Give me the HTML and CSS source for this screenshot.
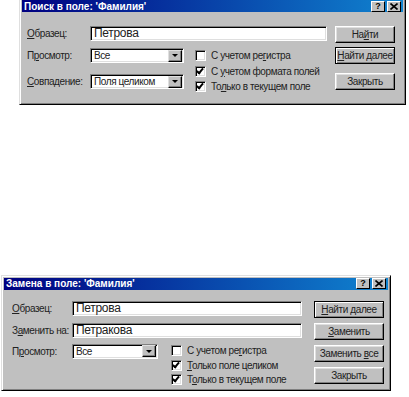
FILE: index.html
```html
<!DOCTYPE html>
<html lang="ru">
<head>
  <meta charset="UTF-8" />
  <title>Поиск и замена</title>
  <link rel="stylesheet" href="styles.css">
</head>
<body>
  <div class="dlg find">
    <div class="titlebar">
      <span>Поиск в поле: 'Фамилия'</span>
      <div class="tb-btns">
        <span class="tb-btn">?</span>
        <span class="tb-btn"><svg width="8" height="7" viewBox="0 0 8 7"><path d="M0.5 0.5 L7.5 6.5 M7.5 0.5 L0.5 6.5" stroke="#000" stroke-width="1.6"/></svg></span>
      </div>
    </div>
    <div class="dlg-body">
      <div class="form">
        <div class="row first">
          <span class="label"><u>О</u>бразец:</span>
          <div class="field">Петрова</div>
        </div>
        <div class="lower">
          <div class="combos">
            <div class="row">
              <span class="label">П<u>р</u>осмотр:</span>
              <div class="combo"><span>Все</span><span class="drop"><i></i></span></div>
            </div>
            <div class="row">
              <span class="label"><u>С</u>овпадение:</span>
              <div class="combo"><span>Поля целиком</span><span class="drop"><i></i></span></div>
            </div>
          </div>
          <div class="checks">
            <div class="check"><span class="cb"></span><span>С учетом ре<u>г</u>истра</span></div>
            <div class="check"><span class="cb on"></span><span>С <u>у</u>четом формата полей</span></div>
            <div class="check"><span class="cb on"></span><span>То<u>л</u>ько в текущем поле</span></div>
          </div>
        </div>
      </div>
      <div class="btns">
        <div class="btn">На<u>й</u>ти</div>
        <div class="btn default"><u>Н</u>айти далее</div>
        <div class="btn close">Закрыть</div>
      </div>
    </div>
  </div>

  <div class="dlg replace">
    <div class="titlebar">
      <span>Замена в поле: 'Фамилия'</span>
      <div class="tb-btns">
        <span class="tb-btn">?</span>
        <span class="tb-btn"><svg width="8" height="7" viewBox="0 0 8 7"><path d="M0.5 0.5 L7.5 6.5 M7.5 0.5 L0.5 6.5" stroke="#000" stroke-width="1.6"/></svg></span>
      </div>
    </div>
    <div class="dlg-body">
      <div class="form">
        <div class="row first">
          <span class="label"><u>О</u>бразец:</span>
          <div class="field">Петрова</div>
        </div>
        <div class="row second">
          <span class="label">З<u>а</u>менить на:</span>
          <div class="field">Петракова</div>
        </div>
        <div class="lower">
          <div class="combos">
            <div class="row">
              <span class="label">П<u>р</u>осмотр:</span>
              <div class="combo"><span>Все</span><span class="drop"><i></i></span></div>
            </div>
          </div>
          <div class="checks">
            <div class="check"><span class="cb"></span><span>С учетом ре<u>г</u>истра</span></div>
            <div class="check"><span class="cb on"></span><span><u>Т</u>олько поле целиком</span></div>
            <div class="check"><span class="cb on"></span><span>Т<u>о</u>лько в текущем поле</span></div>
          </div>
        </div>
      </div>
      <div class="btns">
        <div class="btn default"><u>Н</u>айти далее</div>
        <div class="btn"><u>З</u>аменить</div>
        <div class="btn">Заменить <u>в</u>се</div>
        <div class="btn">Закрыть</div>
      </div>
    </div>
  </div>
</body>
</html>
```

FILE: styles.css
```css
body {
  margin: 0;
  background: #fff;
  font-family: 'Liberation Sans', Arial, sans-serif;
  font-size: 10px;
  color: #000;
}

u { text-decoration: underline; text-underline-offset: 1px; }

.dlg {
  background: #c0c0c0;
  border: 1px solid;
  border-color: #dfdfdf #000 #000 #dfdfdf;
  box-shadow: inset 1px 1px #fff, inset -1px -1px #808080;
  padding: 2px;
  white-space: nowrap;
  letter-spacing: -0.4px;
  color: #222;
}

.find {
  width: 381px;
  margin: -3px 0 0 19px;
}

.replace {
  width: 384px;
  margin: 170px 0 0 1px;
}

.titlebar {
  height: 12px;
  background: linear-gradient(to right, #000080, #1084d0);
  color: #fff;
  font-weight: bold;
  font-size: 10px;
  letter-spacing: 0;
  display: flex;
  align-items: center;
  justify-content: space-between;
  padding: 0 2px 0 2px;
}

.tb-btns { display: flex; gap: 2px; }

.tb-btn {
  width: 12px;
  height: 9px;
  background: #c0c0c0;
  border: 1px solid;
  border-color: #fff #000 #000 #fff;
  color: #000;
  font-size: 9px;
  line-height: 9px;
  display: flex;
  align-items: center;
  justify-content: center;
}

.dlg-body {
  display: flex;
  justify-content: space-between;
}

.find .dlg-body { padding: 14px 8px 7px 5px; }
.replace .dlg-body { padding: 11px 4px 1px 8px; }

.form { display: flex; flex-direction: column; }

.row { display: flex; align-items: center; }

.label { flex-shrink: 0; }
.find .label { width: 63px; }
.replace .label { width: 60px; }

.field {
  height: 13px;
  background: #fff;
  border: 1px solid;
  border-color: #808080 #fff #fff #808080;
  box-shadow: inset 1px 1px #000, inset -1px -1px #dfdfdf;
  font-size: 12px;
  line-height: 13px;
  letter-spacing: -0.3px;
  padding: 0 0 0 3px;
}

.find .field { width: 232px; }
.replace .field { width: 225px; }
.replace .second { margin-top: 7px; }

.lower { display: flex; }
.find .lower { margin-top: 7px; gap: 11px; }
.replace .lower { margin-top: 6px; gap: 13px; }

.combos { display: flex; flex-direction: column; gap: 11px; }

.combo {
  height: 13px;
  background: #fff;
  border: 1px solid;
  border-color: #808080 #fff #fff #808080;
  box-shadow: inset 1px 1px #000, inset -1px -1px #dfdfdf;
  display: flex;
  align-items: center;
  justify-content: space-between;
  padding: 0 1px 0 3px;
}

.find .combo { width: 88px; }
.replace .combo { width: 80px; }

.drop {
  width: 12px;
  height: 10px;
  background: #c0c0c0;
  border: 1px solid;
  border-color: #dfdfdf #000 #000 #dfdfdf;
  box-shadow: inset -1px -1px #808080;
  display: flex;
  align-items: center;
  justify-content: center;
}

.drop i {
  width: 0;
  height: 0;
  border-left: 3px solid transparent;
  border-right: 3px solid transparent;
  border-top: 3px solid #000;
}

.checks { display: flex; flex-direction: column; }

.check {
  height: 15.5px;
  display: flex;
  align-items: center;
  gap: 5px;
}

.replace .check { height: 14.5px; }

.cb {
  width: 9px;
  height: 9px;
  background: #fff;
  border: 1px solid;
  border-color: #808080 #fff #fff #808080;
  box-shadow: inset 1px 1px #000, inset -1px -1px #dfdfdf;
  position: relative;
  flex-shrink: 0;
}

.cb.on::after {
  content: "";
  position: absolute;
  left: 2px;
  top: 0;
  width: 2px;
  height: 5px;
  border: solid #000;
  border-width: 0 2px 2px 0;
  transform: rotate(40deg);
}

.btns { display: flex; flex-direction: column; }
.find .btns { gap: 4px; }
.replace .btns { gap: 5px; }

.btn {
  height: 15px;
  line-height: 15px;
  background: #c0c0c0;
  border: 1px solid;
  border-color: #fff #000 #000 #fff;
  box-shadow: inset -1px -1px #808080, inset 1px 1px #dfdfdf;
  text-align: center;
}

.find .btn { width: 58px; }
.replace .btn { width: 68px; }

.btn.default {
  border-color: #000;
  box-shadow: inset 1px 1px #fff, inset -1px -1px #808080;
}

.find .btn.close { margin-top: 5px; }
```
